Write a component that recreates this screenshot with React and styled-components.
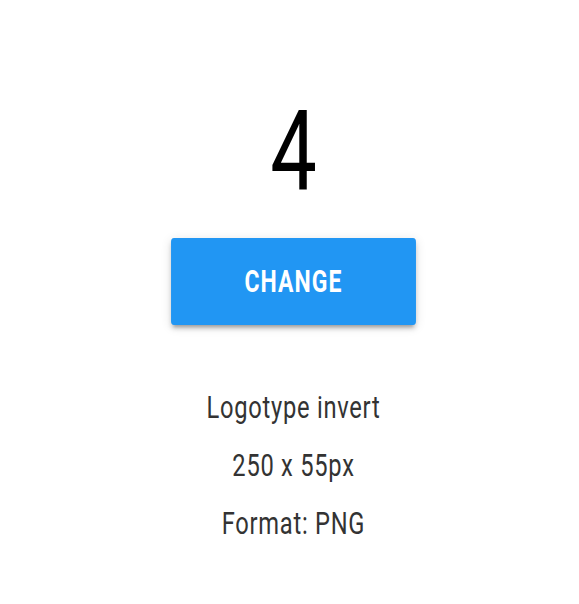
import styled, { createGlobalStyle } from "styled-components";

const GlobalStyle = createGlobalStyle`
  html, body {
    margin: 0;
    padding: 0;
    background: #ffffff;
  }
  body {
    font-family: Roboto, "Liberation Sans", sans-serif;
  }
`;

const Page = styled.div`
  width: 579px;
  height: 604px;
  padding-left: 8px;
  box-sizing: border-box;
  overflow: hidden;
`;

const Column = styled.div`
  display: flex;
  flex-direction: column;
  align-items: center;
  padding-top: 95px;
  transform: scaleX(0.74);
  transform-origin: center top;
`;

const Number = styled.div`
  font-size: 112px;
  line-height: 112px;
  font-weight: 400;
  color: #000000;
`;

const ChangeButton = styled.button`
  display: flex;
  align-items: center;
  justify-content: center;
  width: 331px;
  height: 87px;
  margin-top: 31px;
  border: none;
  border-radius: 4px;
  background: #2196f3;
  color: #ffffff;
  font-family: Roboto, "Liberation Sans", sans-serif;
  font-size: 31px;
  font-weight: 700;
  letter-spacing: 1.5px;
  text-transform: uppercase;
  box-shadow: 0 6px 3px -4px rgba(0, 0, 0, 0.2), 0 4px 5px 0 rgba(0, 0, 0, 0.14),
    0 2px 12px 0 rgba(0, 0, 0, 0.12);
  cursor: pointer;
`;

const InfoList = styled.div`
  display: flex;
  flex-direction: column;
  align-items: center;
  margin-top: 53px;
`;

const InfoLine = styled.p`
  margin: 0;
  font-size: 32px;
  line-height: 58px;
  letter-spacing: 1px;
  color: #333333;
`;

export default function App() {
  const info = ["Logotype invert", "250 x 55px", "Format: PNG"];

  return (
    <>
      <GlobalStyle />
      <Page>
        <Column>
          <Number>4</Number>
          <ChangeButton>Change</ChangeButton>
          <InfoList>
            {info.map((line) => (
              <InfoLine key={line}>{line}</InfoLine>
            ))}
          </InfoList>
        </Column>
      </Page>
    </>
  );
}
